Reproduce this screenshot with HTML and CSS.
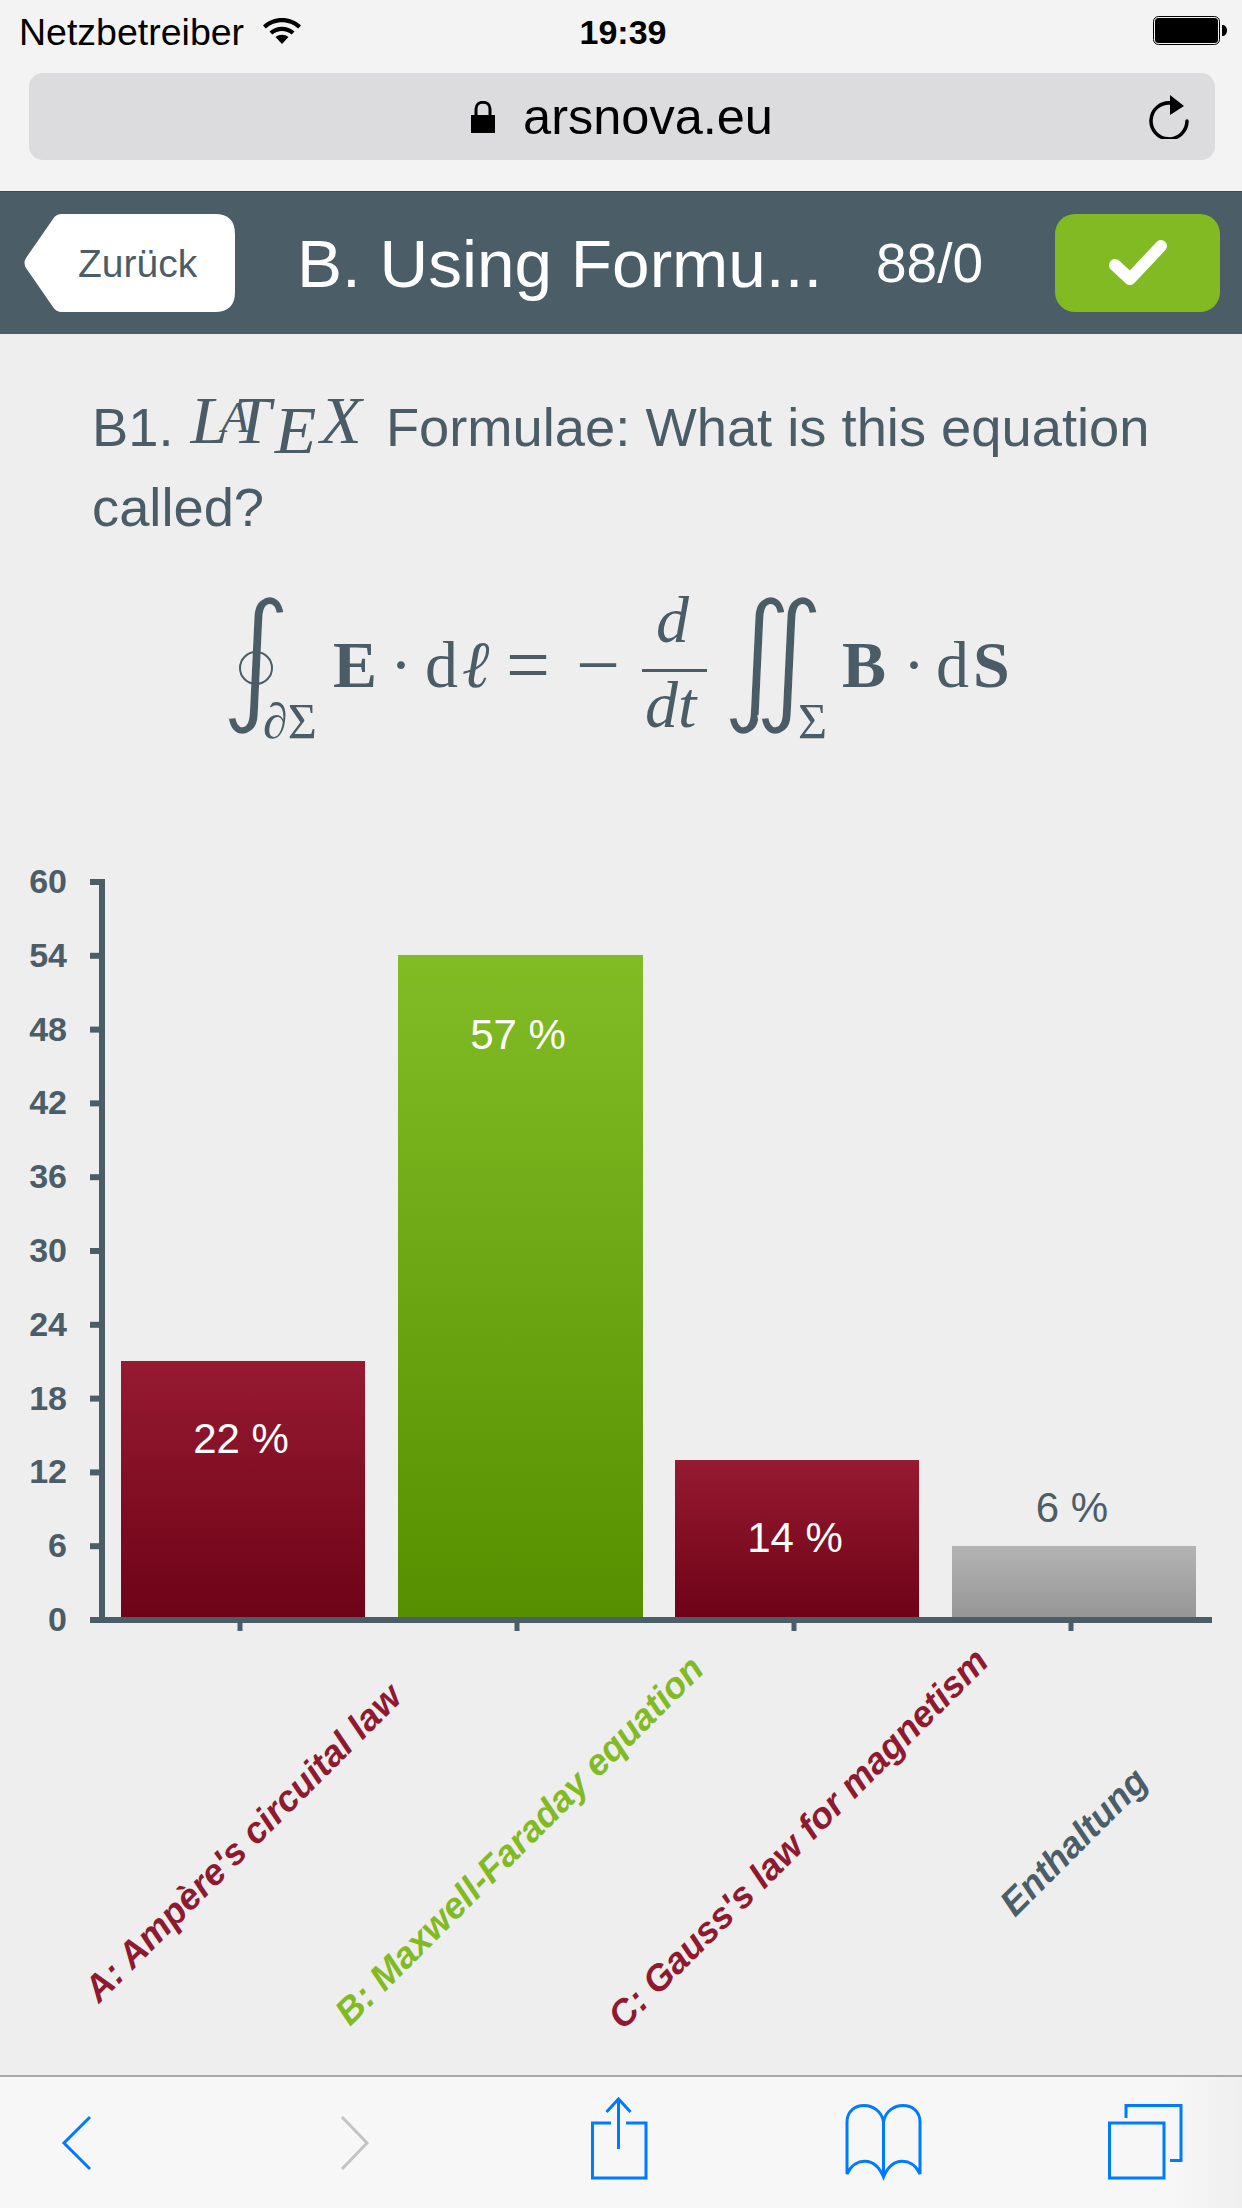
FILE: index.html
```html
<!DOCTYPE html>
<html>
<head>
	<meta charset="utf-8">
	<meta name="viewport" content="width=device-width, initial-scale=1">
	<title>arsnova.eu</title>
	<link rel="stylesheet" href="styles.css">
</head>
<body>

<div class="browser-top">
	<div class="status">
		<div class="carrier">
			<span>Netzbetreiber</span>
			<svg class="wifi" viewBox="0 0 40 28"><path d="M1 9.500C11-.5 29-.5 39 9.500l-2.800 3C27.500 4 12.500 4 3.800 12.500z"/><path d="M7.500 15.500c7-6.500 18-6.500 25 0l-2.800 3c-5.500-4.800-13.900-4.800-19.400 0z"/><path d="M13.500 21c3.800-3 9.200-3 13 0L20 28z"/></svg>
		</div>
		<span class="clock">19:39</span>
		<svg class="battery" viewBox="0 0 74 29"><rect x="0.500" y="0.500" width="66" height="28" rx="5" fill="none" stroke="#000"/><rect x="2" y="2" width="63" height="25" rx="3.500"/><path d="M69 9c3 0 5 2 5 5.500S72 20 69 20z"/></svg>
	</div>
	<div class="urlbar">
		<div class="url">
			<svg class="lock" viewBox="0 0 24 32"><path d="M0 14h24v18H0z"/><path d="M5 15V8c0-9 14-9 14 0v7" fill="none" stroke="#000" stroke-width="3"/></svg>
			<span>arsnova.eu</span>
		</div>
		<svg class="reload" viewBox="0 0 40 44"><path d="M22 8A18 18 0 1 0 38 26" fill="none" stroke="#000" stroke-width="3.500" stroke-linecap="round"/><path d="M21 0l14 11-14 9z"/></svg>
	</div>
</div>

<div class="header">
	<a class="back">Zurück</a>
	<h1 class="title">B. Using Formu...</h1>
	<span class="count">88/0</span>
	<a class="confirm">
		<svg class="check" viewBox="0 0 60 48"><path d="M7 26l15 14L53 7" fill="none" stroke="#fff" stroke-width="12" stroke-linecap="round" stroke-linejoin="round"/></svg>
	</a>
</div>

<div class="content">
	<p class="question">B1. <span class="latex"><i>L</i><i class="l-a">A</i><i class="l-t">T</i><i class="l-e">E</i><i class="l-x">X</i></span> Formulae: What is this equation called?</p>

	<svg class="formula" viewBox="0 560 1242 200">
		<text class="int" x="256" y="705">∫</text>
		<ellipse class="ring" cx="256" cy="668" rx="16" ry="16"/>
		<text class="sub" x="263" y="738">∂Σ</text>
		<text class="bold" x="333" y="687">E</text>
		<text class="rm" x="390" y="687">·</text>
		<text class="rm" x="425" y="687">d</text>
		<text class="lit" x="463" y="687">ℓ</text>
		<text class="op" x="506" y="691">=</text>
		<text class="op" x="576" y="691">−</text>
		<text class="it" x="656" y="642">d</text>
		<rect class="bar" x="642" y="669" width="65" height="3"/>
		<text class="it" x="645" y="727">dt</text>
		<text class="int" x="757" y="705">∫</text>
		<text class="int" x="789" y="705">∫</text>
		<text class="sub" x="798" y="738">Σ</text>
		<text class="bold" x="842" y="687">B</text>
		<text class="rm" x="903" y="687">·</text>
		<text class="rm" x="936" y="687">d</text>
		<text class="bold" x="973" y="687">S</text>
	</svg>

	<svg class="chart" viewBox="0 850 1242 1225">
		<defs>
			<linearGradient id="red" x1="0" y1="0" x2="0" y2="1"><stop offset="0" stop-color="#961a31"/><stop offset="1" stop-color="#6e0317"/></linearGradient>
			<linearGradient id="green" x1="0" y1="0" x2="0" y2="1"><stop offset="0" stop-color="#82bc25"/><stop offset="1" stop-color="#569000"/></linearGradient>
			<linearGradient id="grey" x1="0" y1="0" x2="0" y2="1"><stop offset="0" stop-color="#b4b4b4"/><stop offset="1" stop-color="#969696"/></linearGradient>
		</defs>

		<rect x="121" y="1361" width="244" height="256" fill="url(#red)"/>
		<rect x="398" y="955" width="245" height="662" fill="url(#green)"/>
		<rect x="675" y="1460" width="244" height="157" fill="url(#red)"/>
		<rect x="952" y="1546" width="244" height="71" fill="url(#grey)"/>

		<g id="axes"></g>

		<text class="pct on-bar" x="241" y="1453">22 %</text>
		<text class="pct on-bar" x="518" y="1049">57 %</text>
		<text class="pct on-bar" x="795" y="1552">14 %</text>
		<text class="pct off-bar" x="1072" y="1522">6 %</text>

		<text class="xlabel red" transform="translate(99 2004) rotate(-45)">A: Ampère's circuital law</text>
		<text class="xlabel green" transform="translate(350 2027) rotate(-45)">B: Maxwell-Faraday equation</text>
		<text class="xlabel red" transform="translate(623 2031) rotate(-45)">C: Gauss's law for magnetism</text>
		<text class="xlabel slate" transform="translate(1015 1918) rotate(-45)">Enthaltung</text>
	</svg>
</div>

<div class="toolbar">
	<svg class="tool" viewBox="27 2090 100 100"><path class="blue" d="M90 2117L64 2143L90 2169"/></svg>
	<svg class="tool" viewBox="304 2090 100 100"><path class="off" d="M342 2117L367 2143L342 2169"/></svg>
	<svg class="tool" viewBox="569 2090 100 100">
		<path class="blue" d="M611 2123H592.500V2178H646V2123H626M618.500 2149V2100M606.500 2112L618.500 2099L630.500 2112"/>
	</svg>
	<svg class="tool" viewBox="833 2090 100 100">
		<path class="blue" d="M883.500 2122C880 2100 847 2100 847 2122V2174C855 2157 875 2156 883.500 2177C892 2156 912 2157 920 2174V2122C920 2100 887 2100 883.500 2122ZM883.500 2122V2177"/>
	</svg>
	<svg class="tool" viewBox="1095 2090 100 100">
		<path class="blue" d="M1109.500 2123H1164V2178H1109.500ZM1126 2118V2105.500H1181V2160.500H1170"/>
	</svg>
</div>

<script>
	// y axis ticks and labels, x axis ticks
	var ns = 'http://www.w3.org/2000/svg';
	var axes = document.getElementById('axes');

	function add(tag, attrs, txt) {
		var el = document.createElementNS(ns, tag);
		for (var k in attrs) { el.setAttribute(k, attrs[k]); }
		if (txt !== undefined) { el.textContent = txt; }
		axes.appendChild(el);
	}

	add('rect', { 'class': 'axis', x: 99, y: 879, width: 6, height: 744 });
	add('rect', { 'class': 'axis', x: 90, y: 1617, width: 1122, height: 6 });
	for (var i = 0; i <= 10; i++) {
		var y = 882 + i * 73.8;
		add('rect', { 'class': 'axis', x: 90, y: y - 3, width: 10, height: 6 });
		add('text', { 'class': 'ylabel', x: 67, y: y + 11 }, 60 - i * 6);
	}
	[240, 517, 794, 1071].forEach(function (x) {
		add('rect', { 'class': 'axis', x: x - 2.5, y: 1622, width: 5, height: 9 });
	});
</script>

</body>
</html>
```

FILE: styles.css
```css
* {
	box-sizing: border-box;
	margin: 0;
	padding: 0;
}
html, body {
	width: 1242px;
	height: 2208px;
	overflow: hidden;
}
body {
	background-color: #eeeeee;
	font-family: 'Liberation Sans', Arial, sans-serif;
	color: #4a5c66;
	display: flex;
	flex-direction: column;
}

/* browser chrome */
.browser-top {
	background: #f3f3f3;
	height: 192px;
	border-bottom: 1px solid #3c4a52;
}
.status {
	height: 73px;
	display: grid;
	grid-template-columns: 1fr auto 1fr;
	align-items: start;
	padding: 14px 15px 0 19px;
	color: #000;
}
.carrier {
	display: flex;
	gap: 18px;
	font-size: 37.500px;
	line-height: 36px;
}
.wifi {
	width: 40px;
	height: 28px;
	margin-top: 2px;
}
.clock {
	font-size: 34px;
	line-height: 36px;
	font-weight: bold;
}
.battery {
	width: 74px;
	height: 29px;
	justify-self: end;
	margin-top: 2px;
}
.urlbar {
	height: 87px;
	margin: 0 27px 0 29px;
	background: #dcdcde;
	border-radius: 14px;
	display: grid;
	grid-template-columns: 1fr auto 1fr;
	grid-template-areas: ". url reload";
	align-items: center;
	color: #000;
}
.url {
	grid-area: url;
	display: flex;
	align-items: center;
	gap: 28px;
	font-size: 50.500px;
}
.lock {
	width: 24px;
	height: 32px;
}
.reload {
	grid-area: reload;
	justify-self: end;
	width: 40px;
	height: 44px;
	margin-right: 26px;
}

/* header bar */
.header {
	height: 142px;
	background: #4b5d67;
	display: flex;
	align-items: center;
	padding: 0 22px 0 24px;
	color: #fff;
}
.back {
	width: 211px;
	height: 98px;
	background: #fff;
	clip-path: path("M38 0H191Q211 0 211 20V78Q211 98 191 98H38Q32 98 29 93L2 54Q-1 49 2 44L29 5Q32 0 38 0Z");
	color: #4b5d67;
	font-size: 39px;
	line-height: 100px;
	padding-left: 54px;
}
.title {
	flex: 1;
	font-size: 67.500px;
	font-weight: normal;
	margin-left: 62px;
	white-space: nowrap;
}
.count {
	font-size: 55px;
	margin-right: 72px;
}
.confirm {
	width: 165px;
	height: 98px;
	background: #82ba24;
	border-radius: 20px;
	display: flex;
	align-items: center;
	justify-content: center;
}
.check {
	width: 60px;
	height: 48px;
}

/* question */
.content {
	flex: 1;
	position: relative;
}
.question {
	font-size: 54.300px;
	line-height: 80px;
	padding: 54px 60px 0 92px;
}
.latex {
	font-family: 'Liberation Serif', serif;
	margin: 0 9px 0 2px;
}
.latex i {
	font-size: 68px;
	line-height: 0;
	vertical-align: 3px;
}
.latex .l-a {
	font-size: 45px;
	margin-left: -7px;
	vertical-align: 14px;
}
.latex .l-t { margin-left: -16px; }
.latex .l-e {
	margin-left: 4px;
	vertical-align: -7px;
}
.latex .l-x { margin-left: 4px; }

/* formula */
.formula {
	position: absolute;
	top: 226px;
	left: 0;
	width: 1242px;
	height: 200px;
}
.formula text {
	font-family: 'Liberation Serif', serif;
	fill: #4a5c66;
}
.formula .rm { font-size: 66px; }
.formula .it { font-size: 66px; font-style: italic; }
.formula .lit { font-size: 66px; font-style: italic; font-weight: bold; }
.formula .op { font-size: 78px; }
.formula .bold { font-size: 66px; font-weight: bold; }
.formula .sub { font-size: 50px; }
.formula .int {
	font-family: 'DejaVu Sans', sans-serif;
	font-size: 145px;
	font-style: italic;
	text-anchor: middle;
	stroke: #eeeeee;
	stroke-width: 4px;
}
.formula .bar { fill: #4a5c66; }
.formula .ring {
	fill: none;
	stroke: #4a5c66;
	stroke-width: 2;
}

/* chart */
.chart {
	position: absolute;
	top: 516px;
	left: 0;
	width: 1242px;
	height: 1225px;
}
.chart .axis { fill: #4b5d67; }
.ylabel {
	font-size: 34px;
	font-weight: bold;
	text-anchor: end;
	fill: #4b5d67;
}
.pct {
	font-size: 42px;
	text-anchor: middle;
}
.on-bar { fill: #fff; }
.off-bar { fill: #4b5d67; }
.xlabel {
	font-size: 36.500px;
	font-weight: bold;
	font-style: italic;
}
.xlabel.red { fill: #8f1a2f; }
.xlabel.green { fill: #82ba24; }
.xlabel.slate { fill: #4b5d67; }

/* bottom toolbar */
.toolbar {
	height: 133px;
	background: linear-gradient(to right, #f7f7f7 94%, #efefef);
	border-top: 2px solid #a9a9a9;
	display: grid;
	grid-template-columns: 277px 265px 264px 262px 100px;
	padding: 13px 0 0 27px;
}
.tool {
	width: 100px;
	height: 100px;
}
.blue, .off {
	fill: none;
	stroke: #007aff;
	stroke-width: 3;
}
.off { stroke: #c4c4c4; }
```
